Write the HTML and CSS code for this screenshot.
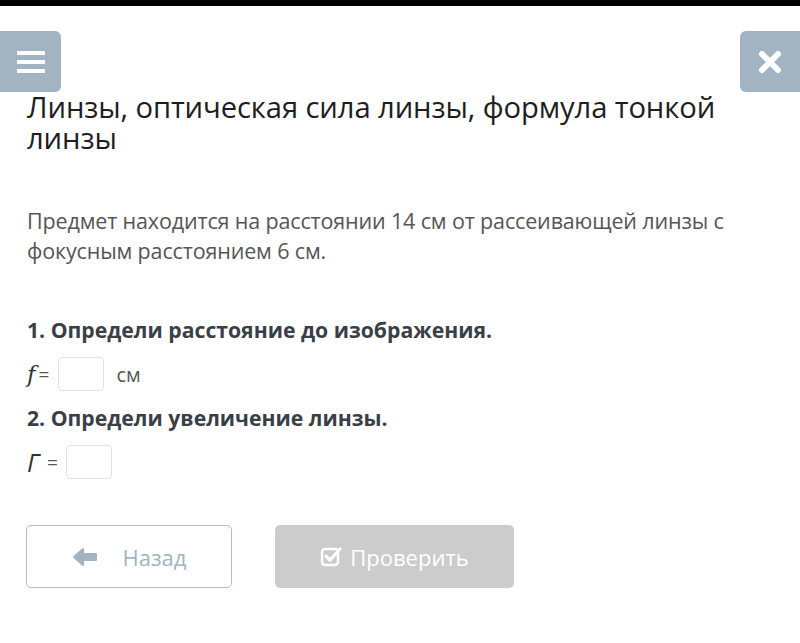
FILE: index.html
```html
<html>
	<head>
		<link rel="stylesheet" href="styles.css">
	</head>
	<body>
		<div class="topBar"></div>
		<div class="toolbar">
			<div class="toolBtn"><svg width="28" height="24" viewBox="0 0 28 24"><rect x="0" y="1" width="28" height="4" fill="#fff"/><rect x="0" y="10" width="28" height="4" fill="#fff"/><rect x="0" y="19" width="28" height="4" fill="#fff"/></svg></div>
			<div class="toolBtn"><svg width="24" height="24" viewBox="0 0 24 24"><path d="M4 4 L20 20 M20 4 L4 20" stroke="#fff" stroke-width="6" stroke-linecap="round"/></svg></div>
		</div>
		<div class="content">
			<h1 class="title">Линзы, оптическая сила линзы, формула тонкой линзы</h1>
			<p class="task">Предмет находится на расстоянии 14 см от рассеивающей линзы с фокусным расстоянием 6 см.</p>
			<div class="question">1. Определи расстояние до изображения.</div>
			<div class="answerRow">
				<span class="var">f</span><span class="eq">=</span><span class="inputBox"></span><span class="unit">см</span>
			</div>
			<div class="question">2. Определи увеличение линзы.</div>
			<div class="answerRow">
				<span class="var gamma">Г</span><span class="eq">=</span><span class="inputBox"></span>
			</div>
			<div class="buttons">
				<div class="btnBack"><svg width="26" height="22" viewBox="0 0 26 22"><path d="M2 11 L11 3 L11 8 L24 8 L24 14 L11 14 L11 19 Z" fill="#a2b4c1" stroke="#a2b4c1" stroke-width="2" stroke-linejoin="round"/></svg><span>Назад</span></div>
				<div class="btnCheck"><svg width="22" height="22" viewBox="0 0 22 22"><rect x="2" y="3" width="16" height="16" rx="3" fill="none" stroke="#fff" stroke-width="2.5"/><path d="M6 10 L10 14 L20 3" fill="none" stroke="#fff" stroke-width="3.2" stroke-linecap="round" stroke-linejoin="round"/></svg><span>Проверить</span></div>
			</div>
		</div>
	</body>
</html>
```
FILE: styles.css
```css
body{ margin: 0; background: #ffffff; font-family: "Open Sans", "Liberation Sans", sans-serif; color: #333333; }
.topBar{ height: 6px; background: #000000; }
.toolbar{ display: flex; justify-content: space-between; margin-top: 25px; height: 61px; }
.toolBtn{ width: 61px; height: 61px; background: #a2b4c1; border-radius: 6px; display: flex; align-items: center; justify-content: center; }
.toolbar .toolBtn:first-child{ border-top-left-radius: 0; border-bottom-left-radius: 0; }
.toolbar .toolBtn:last-child{ width: 60px; border-top-right-radius: 0; border-bottom-right-radius: 0; }
.content{ padding: 0 27px; }
.title{ margin: 0; font-size: 29.2px; line-height: 31px; font-weight: normal; color: #1e1e1e; padding-top: 0; padding-right: 40px; letter-spacing: -0.1px; }
.task{ margin: 52px 0 0 0; font-size: 21.5px; line-height: 29.5px; color: #555555; letter-spacing: -0.15px; padding-right: 20px; }
.question{ font-size: 21.2px; font-weight: bold; color: #3a3f47; line-height: 28px; }
.task + .question{ margin-top: 51px; }
.answerRow{ display: flex; align-items: center; height: 34px; margin: 13px 0 13px 0; }
.var{ font-family: "DejaVu Serif", serif; font-style: italic; font-size: 23px; color: #333333; }
.gamma{ font-family: "Open Sans", sans-serif; font-size: 25px; }
.eq{ font-size: 19px; color: #555555; margin: 0 9px 0 3px; }
.gamma + .eq{ margin: 0 8px 0 8px; }
.inputBox{ width: 44px; height: 32px; border: 1px solid #dfe3e6; border-radius: 4px; }
.unit{ font-size: 20px; color: #555555; margin-left: 12px; }
.buttons{ display: flex; gap: 43px; margin-top: 46px; margin-left: -1px; }
.btnBack{ width: 204px; height: 61px; border: 1px solid #b0bec5; border-radius: 5px; display: flex; align-items: center; justify-content: center; gap: 25px; color: #a2b4c1; font-size: 22px; }
.btnCheck{ width: 239px; height: 63px; background: #cccccc; border-radius: 5px; display: flex; align-items: center; justify-content: center; gap: 8px; color: #ffffff; font-size: 22px; }
```
